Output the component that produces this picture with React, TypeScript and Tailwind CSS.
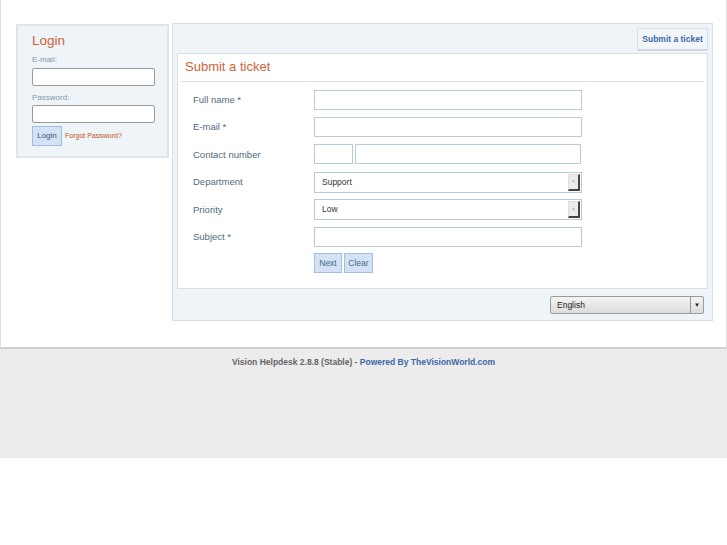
import React from "react";

const font = "font-['Liberation_Sans',Arial,sans-serif]";

const Field: React.FC<{ label: string; children: React.ReactNode }> = ({
  label,
  children,
}) => (
  <div className="flex items-center h-[27.5px]">
    <div className="w-[133px] pl-[12px] text-[9.5px] text-[#4f6a80]">{label}</div>
    {children}
  </div>
);

const TextBox: React.FC<{ w: string }> = ({ w }) => (
  <div className={`${w} h-[20px] bg-white border border-[#b9cbd9]`} />
);

const Select: React.FC<{ value: string }> = ({ value }) => (
  <div className="w-[268px] h-[21px] bg-white border border-[#b9cbd9] flex items-center justify-between pl-[7px] pr-[1px]">
    <span className="text-[8.5px] text-[#333]">{value}</span>
    <div className="w-[12px] h-[17px] bg-[#ececec] border-r-2 border-b-2 border-[#444] border-t border-l border-t-[#ddd] border-l-[#ddd] flex items-center justify-center">
      <span className="text-[5px] text-[#bbb]">▼</span>
    </div>
  </div>
);

export default function App() {
  return (
    <div className={`${font} w-[727px]`}>
      <div className="h-[349px] border-l border-r border-[#dedede] border-b-2 border-b-[#d0d0d0] flex items-start pt-[23px] pl-[15px] gap-[3px]">
        {/* Login */}
        <div className="mt-[1px] w-[153px] h-[134px] bg-[#eff4f8] border-2 border-[#e0e4e8] pl-[14px] pt-[6px]">
          <div className="text-[13.5px] text-[#d0623a] leading-[18px]">Login</div>
          <div className="mt-[5px] text-[8px] text-[#7d97ab] leading-[10px]">E-mail:</div>
          <div className="mt-[3px] w-[123px] h-[18px] bg-white border border-[#9a9a9a] rounded-[2px]" />
          <div className="mt-[7px] text-[8px] text-[#7d97ab] leading-[10px]">Password:</div>
          <div className="mt-[2px] w-[123px] h-[18px] bg-white border border-[#9a9a9a] rounded-[2px]" />
          <div className="mt-[3px] flex items-center gap-[3px]">
            <div className="w-[30px] h-[20px] bg-[#d4e2f5] border border-[#a6bde0] flex items-center justify-center text-[8px] text-[#3c5670]">
              Login
            </div>
            <span className="text-[7px] text-[#c4511d]">Forgot Password?</span>
          </div>
        </div>

        {/* Ticket panel */}
        <div className="w-[541px] h-[298px] bg-[#eff4f8] border border-[#d6dfe6] px-[4px] flex flex-col">
          <div className="h-[29px] flex justify-end items-start pt-[4px]">
            <div className="w-[71px] h-[23px] bg-[#f3f6f9] border border-[#d9e0e6] border-b-2 border-b-[#cfd6dc] flex items-center justify-center text-[8.5px] font-bold text-[#3d68a8]">
              Submit a ticket
            </div>
          </div>
          <div className="h-[236px] bg-white border border-[#d7e0e7] px-[3px]">
            <div className="h-[28px] border-b border-[#d7e1e9] pl-[4px] pt-[4px] text-[13px] text-[#d0623a] leading-[18px]">
              Submit a ticket
            </div>
            <div className="pt-[4px]">
              <Field label="Full name *">
                <TextBox w="w-[268px]" />
              </Field>
              <Field label="E-mail *">
                <TextBox w="w-[268px]" />
              </Field>
              <Field label="Contact number">
                <div className="flex gap-[2px] -mt-[2px]">
                  <TextBox w="w-[39px]" />
                  <TextBox w="w-[226px]" />
                </div>
              </Field>
              <Field label="Department">
                <Select value="Support" />
              </Field>
              <Field label="Priority">
                <Select value="Low" />
              </Field>
              <Field label="Subject *">
                <TextBox w="w-[268px]" />
              </Field>
              <div className="flex gap-[2px] pl-[133px] mt-[2px]">
                <div className="w-[28px] h-[20px] bg-[#d4e2f5] border border-[#a6bde0] flex items-center justify-center text-[8.5px] text-[#4a6a88]">
                  Next
                </div>
                <div className="w-[29px] h-[20px] bg-[#d4e2f5] border border-[#a6bde0] flex items-center justify-center text-[8.5px] text-[#4a6a88]">
                  Clear
                </div>
              </div>
            </div>
          </div>
          <div className="flex justify-end pt-[7px] pr-[4px]">
            <div className="w-[154px] h-[18px] rounded-[2px] border border-[#9a9a9a] bg-gradient-to-b from-[#f4f4f4] to-[#dcdcdc] flex items-center justify-between">
              <span className="pl-[6px] text-[8.5px] text-[#222]">English</span>
              <div className="w-[13px] h-full border-l border-[#9a9a9a] flex items-center justify-center text-[6px] text-[#222]">
                ▼
              </div>
            </div>
          </div>
        </div>
      </div>

      {/* Footer */}
      <div className="h-[109px] bg-[#ececec] pt-[7px] text-center text-[8.5px] font-bold">
        <span className="text-[#666]">Vision Helpdesk 2.8.8 (Stable) - </span>
        <span className="text-[#3d68a8]">Powered By TheVisionWorld.com</span>
      </div>
    </div>
  );
}
